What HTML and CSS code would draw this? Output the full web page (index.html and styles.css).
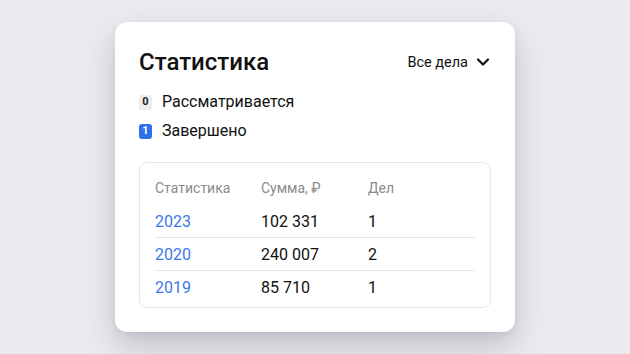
FILE: index.html
```html
<!DOCTYPE html>
<html lang="ru">
<head>
<meta charset="utf-8">
<link rel="stylesheet" href="styles.css">
</head>
<body>
<div class="page">
  <section class="card">
    <header class="card-head">
      <h1 class="title">Статистика</h1>
      <button class="filter">Все дела
        <svg class="chev" width="14" height="14" viewBox="0 0 14 14"><path d="M2 4.5 L7 9.5 L12 4.5" fill="none" stroke="#111" stroke-width="2.2" stroke-linecap="round" stroke-linejoin="round"/></svg>
      </button>
    </header>
    <ul class="legend">
      <li class="legend-item"><span class="badge badge-gray">0</span>Рассматривается</li>
      <li class="legend-item"><span class="badge badge-blue">1</span>Завершено</li>
    </ul>
    <div class="table">
      <div class="row head"><span>Статистика</span><span>Сумма, ₽</span><span>Дел</span></div>
      <div class="row line"><span class="year">2023</span><span>102 331</span><span>1</span></div>
      <div class="row line"><span class="year">2020</span><span>240 007</span><span>2</span></div>
      <div class="row"><span class="year">2019</span><span>85 710</span><span>1</span></div>
    </div>
  </section>
</div>
</body>
</html>
```

FILE: styles.css
```css
* { box-sizing: border-box; }
html, body { margin: 0; padding: 0; }
body {
  background: #ebebef;
  font-family: Roboto, "Noto Sans", sans-serif;
  color: #111;
  width: 630px;
  height: 354px;
  overflow: hidden;
}
.page {
  padding: 22px 0 0 115px;
}
.card {
  width: 400px;
  height: 310px;
  background: #fff;
  border-radius: 12px;
  padding: 24px;
  box-shadow: 0 14px 30px rgba(40, 40, 60, 0.22), 0 2px 6px rgba(40,40,60,0.06);
}
.card-head {
  display: flex;
  align-items: center;
  justify-content: space-between;
  height: 32px;
}
.title {
  margin: 0;
  font-size: 24px;
  font-weight: 500;
  line-height: 32px;
}
.filter {
  border: 0;
  background: none;
  padding: 0;
  font-family: inherit;
  font-size: 14.5px;
  color: #111;
  display: flex;
  align-items: center;
  gap: 8px;
  margin-right: 1px;
}
.chev { display: block; }
.legend {
  list-style: none;
  margin: 14px 0 0;
  padding: 0;
  display: flex;
  flex-direction: column;
  gap: 9px;
}
.legend-item {
  display: flex;
  align-items: center;
  height: 20px;
  font-size: 16px;
  line-height: 20px;
}
.badge {
  width: 13px;
  height: 15px;
  border-radius: 3px;
  font-size: 11px;
  font-weight: 700;
  display: inline-flex;
  align-items: center;
  justify-content: center;
  margin-right: 10px;
}
.badge-gray { background: #ededf0; color: #222; }
.badge-blue { background: #2f6fe9; color: #fff; }
.table {
  margin-top: 21px;
  border: 1px solid #e8e8ec;
  border-radius: 8px;
  padding: 8px 15px 3px;
}
.row {
  display: grid;
  grid-template-columns: 106px 107px 1fr;
  align-items: center;
  height: 33px;
  font-size: 16px;
}
.row.head {
  height: 34px;
  font-size: 14px;
  color: #8a8a8e;
}
.row.line { border-bottom: 1px solid #e4e4e6; }
.year { color: #3b78e7; }
```
